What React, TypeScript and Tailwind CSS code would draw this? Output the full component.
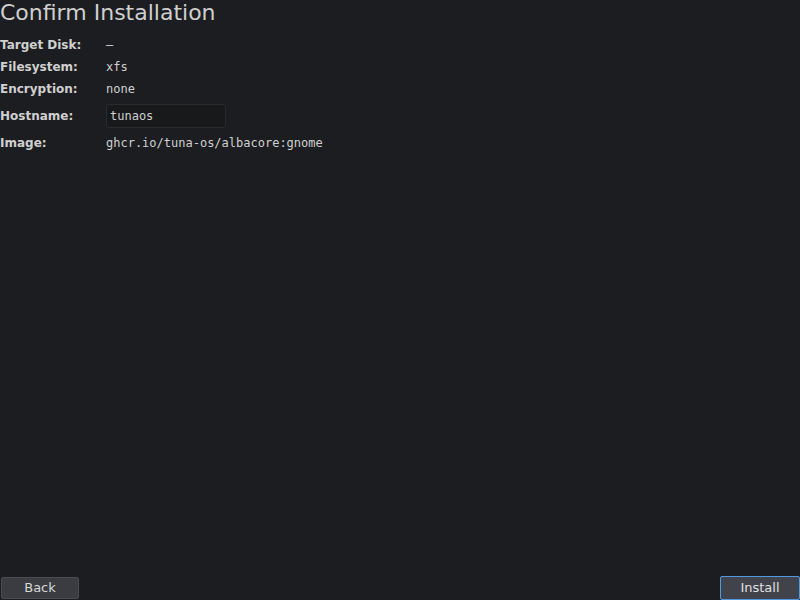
import React from "react";

const rows: { label: string; value: string }[] = [
  { label: "Target Disk:", value: "—" },
  { label: "Filesystem:", value: "xfs" },
  { label: "Encryption:", value: "none" },
];

export default function App() {
  return (
    <div className="flex h-[600px] w-[800px] flex-col bg-[#1c1d20] text-[#d4d4d4] [font-family:'DejaVu_Sans',sans-serif]">
      <h1 className="text-[22px] leading-[26px] text-[#cfcfcf]">Confirm Installation</h1>
      <div className="mt-[8px] flex flex-col">
        {rows.map((r) => (
          <div key={r.label} className="flex h-[22px] items-center">
            <span className="w-[106px] text-[12px] font-bold text-[#d0d0d0]">{r.label}</span>
            <span className="text-[12px] text-[#d0d0d0] [font-family:'DejaVu_Sans_Mono',monospace]">{r.value}</span>
          </div>
        ))}
        <div className="mt-[4px] flex h-[24px] items-center">
          <span className="w-[106px] text-[12px] font-bold text-[#d0d0d0]">Hostname:</span>
          <input
            defaultValue="tunaos"
            className="h-[24px] w-[120px] rounded-[2px] border border-[#2a2b2e] bg-[#18191b] px-[3px] text-[12px] text-[#d0d0d0] outline-none [font-family:'DejaVu_Sans_Mono',monospace]"
          />
        </div>
        <div className="mt-[4px] flex h-[22px] items-center">
          <span className="w-[106px] text-[12px] font-bold text-[#d0d0d0]">Image:</span>
          <span className="text-[12px] text-[#d0d0d0] [font-family:'DejaVu_Sans_Mono',monospace]">ghcr.io/tuna-os/albacore:gnome</span>
        </div>
      </div>
      <div className="flex-1" />
      <div className="flex items-end justify-between">
        <button className="mb-[1px] ml-[1px] h-[22px] w-[78px] rounded-[2px] border border-[#4a4c52] bg-[#3a3c41] text-[13px] text-[#d8d8d8]">
          Back
        </button>
        <button className="h-[24px] w-[80px] rounded-[2px] border border-[#4d9be0] bg-[#40434a] text-[13px] text-[#e0e0e0]">
          Install
        </button>
      </div>
    </div>
  );
}
